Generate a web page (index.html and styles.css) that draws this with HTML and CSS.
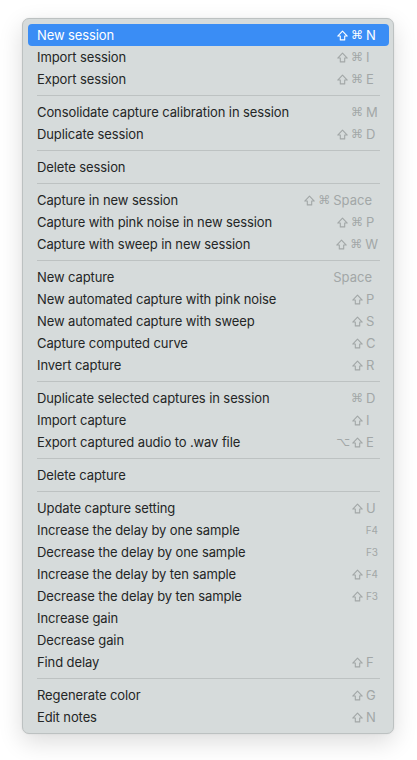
FILE: index.html
```html
<!DOCTYPE html>
<html lang="en">
<head>
    <meta charset="UTF-8">
    <meta name="viewport" content="width=device-width, initial-scale=1.0">
    <title>Session menu</title>
    <link rel="stylesheet" href="styles.css">
</head>
<body>
    <svg width="0" height="0" class="defs">
        <symbol id="shift" viewBox="0 0 12 12">
            <path d="M6 1.2 L11.2 6.6 H8.4 V10.8 H3.6 V6.6 H0.8 Z" fill="none" stroke="currentColor" stroke-width="1.2" stroke-linejoin="round"/>
        </symbol>
    </svg>
    <ul class="menu">
        <li class="item active"><span class="label">New session</span><span class="keys"><svg class="shift"><use href="#shift"/></svg><span class="mods">⌘</span><span class="key">N</span></span></li>
        <li class="item"><span class="label">Import session</span><span class="keys"><svg class="shift"><use href="#shift"/></svg><span class="mods">⌘</span><span class="key">I</span></span></li>
        <li class="item"><span class="label">Export session</span><span class="keys"><svg class="shift"><use href="#shift"/></svg><span class="mods">⌘</span><span class="key">E</span></span></li>
        <li class="sep"></li>
        <li class="item"><span class="label">Consolidate capture calibration in session</span><span class="keys"><span class="mods">⌘</span><span class="key">M</span></span></li>
        <li class="item"><span class="label">Duplicate session</span><span class="keys"><svg class="shift"><use href="#shift"/></svg><span class="mods">⌘</span><span class="key">D</span></span></li>
        <li class="sep"></li>
        <li class="item"><span class="label">Delete session</span></li>
        <li class="sep"></li>
        <li class="item"><span class="label">Capture in new session</span><span class="keys"><svg class="shift"><use href="#shift"/></svg><span class="mods">⌘</span><span class="key wide">Space</span></span></li>
        <li class="item"><span class="label">Capture with pink noise in new session</span><span class="keys"><svg class="shift"><use href="#shift"/></svg><span class="mods">⌘</span><span class="key">P</span></span></li>
        <li class="item"><span class="label">Capture with sweep in new session</span><span class="keys"><svg class="shift"><use href="#shift"/></svg><span class="mods">⌘</span><span class="key">W</span></span></li>
        <li class="sep"></li>
        <li class="item"><span class="label">New capture</span><span class="keys"><span class="key wide">Space</span></span></li>
        <li class="item"><span class="label">New automated capture with pink noise</span><span class="keys"><svg class="shift"><use href="#shift"/></svg><span class="key">P</span></span></li>
        <li class="item"><span class="label">New automated capture with sweep</span><span class="keys"><svg class="shift"><use href="#shift"/></svg><span class="key">S</span></span></li>
        <li class="item"><span class="label">Capture computed curve</span><span class="keys"><svg class="shift"><use href="#shift"/></svg><span class="key">C</span></span></li>
        <li class="item"><span class="label">Invert capture</span><span class="keys"><svg class="shift"><use href="#shift"/></svg><span class="key">R</span></span></li>
        <li class="sep"></li>
        <li class="item"><span class="label">Duplicate selected captures in session</span><span class="keys"><span class="mods">⌘</span><span class="key">D</span></span></li>
        <li class="item"><span class="label">Import capture</span><span class="keys"><svg class="shift"><use href="#shift"/></svg><span class="key">I</span></span></li>
        <li class="item"><span class="label">Export captured audio to .wav file</span><span class="keys"><span class="mods opt">⌥</span><svg class="shift"><use href="#shift"/></svg><span class="key">E</span></span></li>
        <li class="sep"></li>
        <li class="item"><span class="label">Delete capture</span></li>
        <li class="sep"></li>
        <li class="item"><span class="label">Update capture setting</span><span class="keys"><svg class="shift"><use href="#shift"/></svg><span class="key">U</span></span></li>
        <li class="item"><span class="label">Increase the delay by one sample</span><span class="keys"><span class="key fn">F4</span></span></li>
        <li class="item"><span class="label">Decrease the delay by one sample</span><span class="keys"><span class="key fn">F3</span></span></li>
        <li class="item"><span class="label">Increase the delay by ten sample</span><span class="keys"><svg class="shift"><use href="#shift"/></svg><span class="key fn">F4</span></span></li>
        <li class="item"><span class="label">Decrease the delay by ten sample</span><span class="keys"><svg class="shift"><use href="#shift"/></svg><span class="key fn">F3</span></span></li>
        <li class="item"><span class="label">Increase gain</span></li>
        <li class="item"><span class="label">Decrease gain</span></li>
        <li class="item"><span class="label">Find delay</span><span class="keys"><svg class="shift"><use href="#shift"/></svg><span class="key">F</span></span></li>
        <li class="sep"></li>
        <li class="item"><span class="label">Regenerate color</span><span class="keys"><svg class="shift"><use href="#shift"/></svg><span class="key">G</span></span></li>
        <li class="item"><span class="label">Edit notes</span><span class="keys"><svg class="shift"><use href="#shift"/></svg><span class="key">N</span></span></li>
    </ul>
</body>
</html>
```

FILE: styles.css
```css
* {
    margin: 0;
    padding: 0;
    box-sizing: border-box;
}

body {
    font-family: 'Inter', 'Liberation Sans', sans-serif;
    background-color: #fff;
    color: #242626;
    padding: 18px 23px 30px 22px;
}

.defs {
    position: absolute;
}

.menu {
    list-style: none;
    width: 372px;
    background-color: #d6dbdb;
    border: 1px solid #bcc1c1;
    border-radius: 7px;
    padding: 5px 4px 5px 5px;
    box-shadow: 0 8px 24px rgba(0, 0, 0, 0.14), 0 0 2px rgba(0, 0, 0, 0.08);
}

.item {
    display: flex;
    align-items: center;
    height: 22px;
    padding: 0 11px 0 9px;
    font-size: 13px;
    letter-spacing: -0.1px;
    border-radius: 4px;
}

.item.active {
    background-color: #3a8df5;
    color: #fff;
}

.label {
    flex: 1;
    white-space: nowrap;
}

.keys {
    display: flex;
    align-items: center;
    color: #a2a7a7;
    letter-spacing: 0;
}

.item.active .keys {
    color: #fff;
}

.shift {
    width: 11px;
    height: 11px;
    margin-right: 3px;
}

.mods {
    font-family: 'DejaVu Sans', sans-serif;
    font-size: 12px;
    margin-right: 3px;
}

.mods.opt {
    margin-right: 2px;
}

.key {
    min-width: 12px;
}

.key.wide {
    margin-right: 6px;
}

.key.fn {
    font-size: 10px;
}

.sep {
    height: 1px;
    background-color: #bdc2c2;
    margin: 5px 9px;
}
```
